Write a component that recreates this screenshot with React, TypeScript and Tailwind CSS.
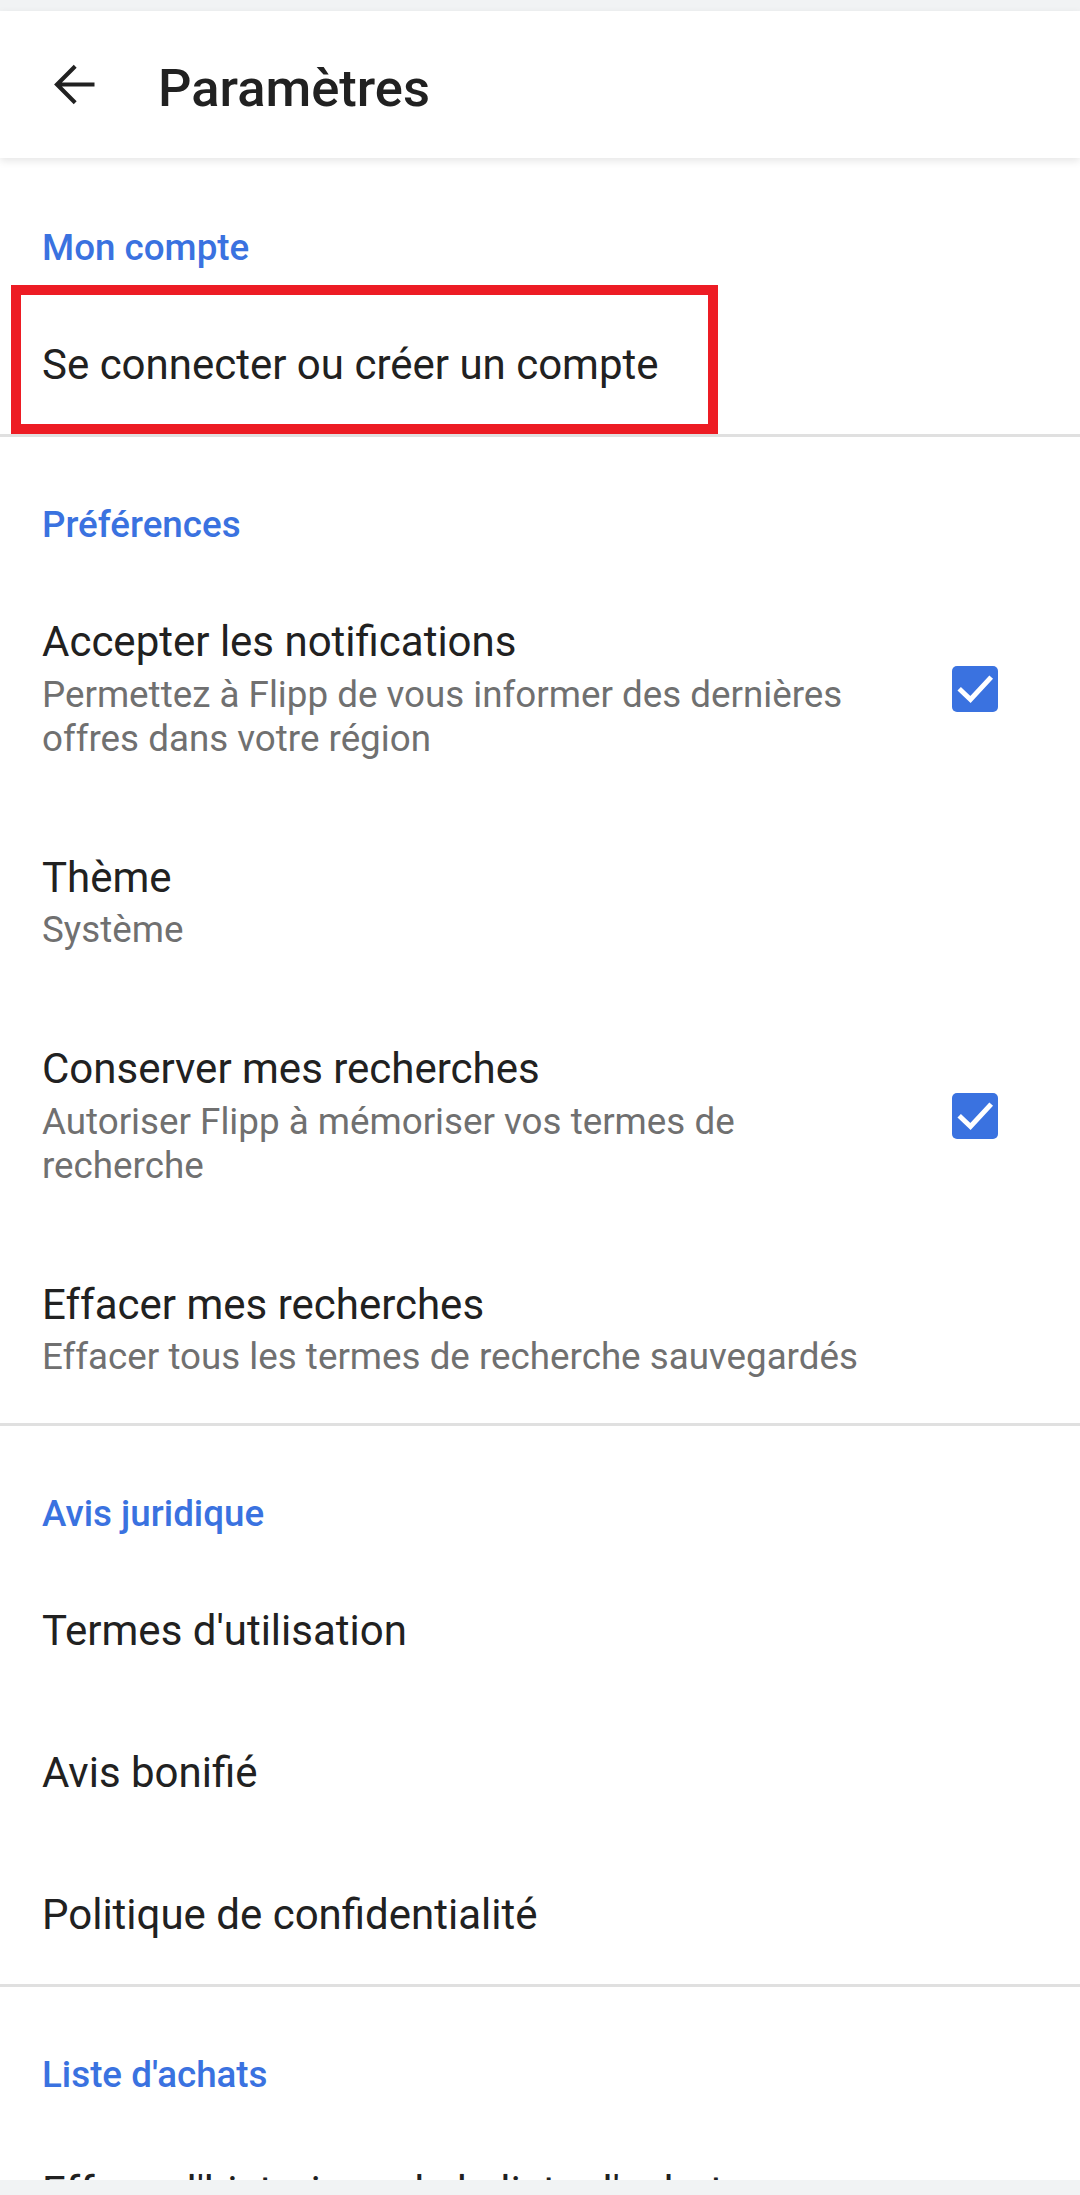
import type { ReactNode } from "react"

// One row of the settings list: title, optional summary, optional checkbox.
interface PrefItem {
  title: string
  summary?: string
  checked?: boolean
  highlight?: boolean
}

interface PrefSection {
  label: string
  items: PrefItem[]
}

const sections: PrefSection[] = [
  {
    label: "Mon compte",
    items: [{ title: "Se connecter ou créer un compte", highlight: true }],
  },
  {
    label: "Préférences",
    items: [
      {
        title: "Accepter les notifications",
        summary: "Permettez à Flipp de vous informer des dernières offres dans votre région",
        checked: true,
      },
      { title: "Thème", summary: "Système" },
      {
        title: "Conserver mes recherches",
        summary: "Autoriser Flipp à mémoriser vos termes de recherche",
        checked: true,
      },
      {
        title: "Effacer mes recherches",
        summary: "Effacer tous les termes de recherche sauvegardés",
      },
    ],
  },
  {
    label: "Avis juridique",
    items: [
      { title: "Termes d'utilisation" },
      { title: "Avis bonifié" },
      { title: "Politique de confidentialité" },
    ],
  },
  {
    label: "Liste d'achats",
    items: [{ title: "Effacer l'historique de la liste d'achats" }],
  },
]

function BackArrow() {
  return (
    <svg viewBox="0 0 24 24" className="h-[63px] w-[63px]" fill="#212121">
      <path d="M20 11.2H7.6l5.6-5.6L12.1 4.5 4.6 12l7.5 7.5 1.1-1.1-5.6-5.6H20v-1.6z" />
    </svg>
  )
}

function CheckBox() {
  return (
    <div className="h-[46px] w-[46px] rounded-[5px] bg-[#3a72e0]">
      <svg viewBox="0 0 46 46" className="h-[46px] w-[46px]" fill="none" stroke="#fff" strokeWidth="5" strokeLinecap="square">
        <path d="M9 24.5l9.5 9L37.5 13" />
      </svg>
    </div>
  )
}

function Row({ item }: { item: PrefItem }) {
  return (
    <div className="relative flex items-center pl-[42px] pr-[82px] pt-[48px] pb-[44px]">
      <div className="flex-1 pr-[80px]">
        <div className="text-[42px] leading-[50px] text-[#212121]">{item.title}</div>
        {item.summary && (
          <div className="mt-[5.5px] text-[36.75px] leading-[44px] text-[#707070]">{item.summary}</div>
        )}
      </div>
      {item.checked && <CheckBox />}
      {/* annotation frame drawn over the row */}
      {item.highlight && (
        <div className="absolute left-[11px] top-[-7px] h-[149px] w-[707px] border-[10px] border-[#ed1c24]" />
      )}
    </div>
  )
}

function Section({ section, first, children }: { section: PrefSection; first?: boolean; children?: ReactNode }) {
  return (
    <div>
      <div
        className={`pl-[42px] pb-[22px] text-[36.75px] font-medium leading-[44px] text-[#3a72e0] ${
          first ? "pt-[68px]" : "pt-[66px]"
        }`}
      >
        {section.label}
      </div>
      {section.items.map((it) => (
        <Row key={it.title} item={it} />
      ))}
      {children}
    </div>
  )
}

export default function App() {
  return (
    <div className="flex h-[2195px] w-[1080px] flex-col overflow-hidden bg-white font-['Roboto',sans-serif]">
      <div className="h-[11px] shrink-0 bg-[#f1f3f4]" />
      <header className="relative z-10 flex h-[147px] shrink-0 items-start bg-white shadow-[0_3px_8px_rgba(0,0,0,0.10)]">
        <div className="ml-[42px] mt-[42px]">
          <BackArrow />
        </div>
        <h1 className="ml-[53px] mt-[46px] text-[52.5px] font-medium leading-[63px] text-[#212121]">Paramètres</h1>
      </header>
      <main className="flex-1 overflow-hidden">
        {sections.map((s, i) => (
          <div key={s.label}>
            <Section section={s} first={i === 0} />
            {i < sections.length - 1 && <div className="h-[3px] bg-[#e0e0e0]" />}
          </div>
        ))}
      </main>
      <div className="h-[15px] shrink-0 bg-[#f1f3f4]" />
    </div>
  )
}
